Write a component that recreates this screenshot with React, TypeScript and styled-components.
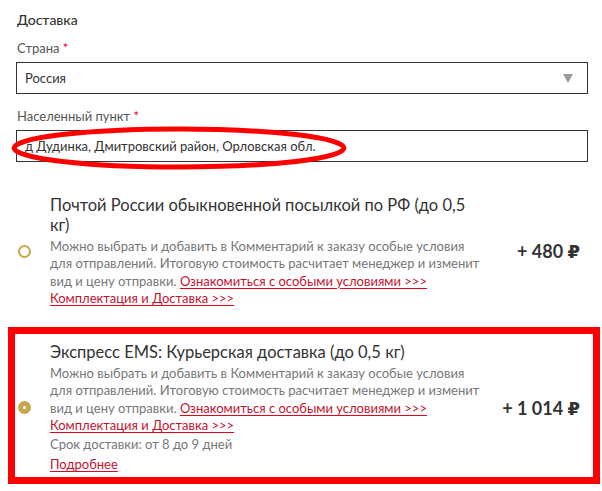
import React from "react";
import styled, { createGlobalStyle, css } from "styled-components";

const Global = createGlobalStyle`
  html, body { margin: 0; padding: 0; background: #fff; }
  body { font-family: Lato, "Open Sans", "DejaVu Sans", sans-serif; color: #333; }
  * { box-sizing: border-box; }
`;

const Page = styled.div`
  width: 602px;
  min-height: 491px;
  padding: 10px 14px 0 16px;
`;

const Heading = styled.div`
  font-size: 14px;
  line-height: 20px;
  font-weight: 500;
  color: #333;
  padding-left: 1px;
`;

const Label = styled.div<{ $top: number }>`
  font-size: 13px;
  line-height: 18px;
  color: #555;
  padding-left: 1px;
  margin-top: ${(p) => p.$top}px;
  margin-bottom: 5px;
`;

const Star = styled.span`
  color: #e3001b;
`;

const Field = styled.div`
  position: relative;
  height: 32px;
  border: 1px solid #333;
  display: flex;
  align-items: center;
  padding: 0 8px 0 8px;
  font-size: 13px;
  color: #333;
`;

const Triangle = styled.span`
  margin-left: auto;
  margin-right: 6px;
  width: 0;
  height: 0;
  border-left: 5.5px solid transparent;
  border-right: 5.5px solid transparent;
  border-top: 9px solid #9a9a9a;
`;

const Ellipse = styled.svg`
  position: absolute;
  left: -10px;
  top: -8px;
  overflow: visible;
  pointer-events: none;
`;

const Options = styled.div`
  margin-top: 33px;
  display: flex;
  flex-direction: column;
  gap: 35px;
`;

const Option = styled.div<{ $highlighted?: boolean }>`
  position: relative;
  display: grid;
  grid-template-columns: 34px 430px 1fr;
  align-items: center;
  ${(p) =>
    p.$highlighted &&
    css`
      &::before {
        content: "";
        position: absolute;
        top: -15px;
        left: -8px;
        right: -12px;
        bottom: -11px;
        border: 7px solid #ff0000;
        pointer-events: none;
      }
    `}
`;

const Radio = styled.span<{ $checked?: boolean }>`
  width: 13px;
  height: 13px;
  margin-left: 2px;
  border-radius: 50%;
  border: 2px solid #c8a74c;
  background: ${(p) => (p.$checked ? "#c8a74c" : "#fff")};
  display: flex;
  align-items: center;
  justify-content: center;
  &::after {
    content: "";
    width: 3px;
    height: 3px;
    border-radius: 50%;
    background: ${(p) => (p.$checked ? "#fff" : "transparent")};
  }
`;

const Body = styled.div`
  display: flex;
  flex-direction: column;
`;

const Title = styled.div`
  font-size: 16.5px;
  line-height: 20px;
  color: #333;
`;

const Desc = styled.div`
  margin-top: 3px;
  font-size: 13px;
  line-height: 17.3px;
  color: #777;
`;

const Link = styled.a`
  color: #c4122f;
  text-decoration: underline;
  text-decoration-color: #e5001b;
  text-underline-offset: 1.5px;
  cursor: pointer;
`;

const Meta = styled.div`
  margin-top: 1px;
  font-size: 13px;
  line-height: 18px;
  color: #777;
`;

const More = styled.div`
  margin-top: 2px;
  font-size: 13px;
  line-height: 18px;
`;

const Price = styled.div`
  justify-self: end;
  margin-right: 8px;
  font-size: 18px;
  font-weight: 700;
  color: #333;
  white-space: nowrap;
`;

const Description = () => (
  <Desc>
    Можно выбрать и добавить в Комментарий к заказу особые условия для
    отправлений. Итоговую стоимость расчитает менеджер и изменит вид и цену
    отправки. <Link>Ознакомиться с особыми условиями &gt;&gt;&gt;</Link>{" "}
    <Link>Комплектация и Доставка &gt;&gt;&gt;</Link>
  </Desc>
);

export default function App() {
  return (
    <Page>
      <Global />
      <Heading>Доставка</Heading>
      <Label $top={9}>
        Страна <Star>*</Star>
      </Label>
      <Field>
        Россия
        <Triangle />
      </Field>
      <Label $top={13}>
        Населенный пункт <Star>*</Star>
      </Label>
      <Field>
        д Дудинка, Дмитровский район, Орловская обл.
        <Ellipse width="350" height="48" viewBox="0 0 350 48">
          <ellipse cx="172" cy="25" rx="165" ry="19" fill="none" stroke="#ff0000" strokeWidth="5" />
        </Ellipse>
      </Field>
      <Options>
        <Option>
          <Radio />
          <Body>
            <Title>Почтой России обыкновенной посылкой по РФ (до 0,5 кг)</Title>
            <Description />
          </Body>
          <Price>+ 480 ₽</Price>
        </Option>
        <Option $highlighted>
          <Radio $checked />
          <Body>
            <Title>Экспресс EMS: Курьерская доставка (до 0,5 кг)</Title>
            <Description />
            <Meta>Срок доставки: от 8 до 9 дней</Meta>
            <More>
              <Link>Подробнее</Link>
            </More>
          </Body>
          <Price>+ 1 014 ₽</Price>
        </Option>
      </Options>
    </Page>
  );
}
